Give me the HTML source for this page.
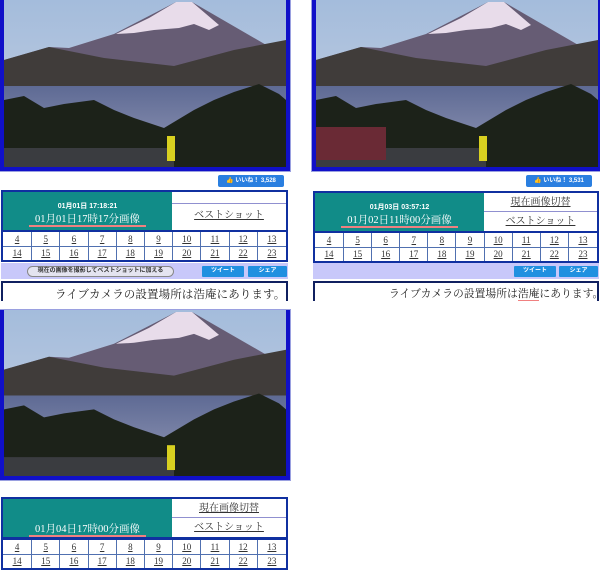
<!DOCTYPE html>
<html><head><meta charset="utf-8"><style>
*{margin:0;padding:0;box-sizing:border-box}
body{width:600px;height:569px;overflow:hidden;background:#fff;position:relative;font-family:"Liberation Serif","Noto Serif CJK SC",serif}
.p{position:absolute;width:290px}
.img{position:absolute;left:0;top:0;width:290px;height:171px;border:4px solid #1010c8;border-top:none;outline:1px solid #9aa0e0}
.img svg{display:block;width:282px;height:167px}
.like{position:absolute;right:6px;top:175px;width:66px;height:12px;background:#2a7fe0;color:#fff;font:bold 6px "Liberation Sans","Noto Sans CJK JP",sans-serif;line-height:12px;text-align:center;border-radius:2px}
.box{position:absolute;left:1px;width:287px;height:42px;border:2px solid #1030a0;display:flex}
.teal{width:169px;background:#118c88;color:#fff;text-align:center;position:relative}
.teal .t1{font:bold 7px "Liberation Sans","Noto Sans CJK JP",sans-serif;position:absolute;top:9px;width:100%}
.teal .t2{font-size:10.5px;position:absolute;top:19px;width:100%}
.teal .t2 span{border-bottom:2px solid #f08080;padding:0 6px}
.wr{flex:1;background:#fff;font-size:10px;text-align:center;color:#333}
.wr div{height:19px;line-height:19px;text-decoration:underline}
.wr div.l{border-bottom:1px solid #9090d0}
table{position:absolute;left:1px;width:287px;border-collapse:collapse;border:2px solid #1030a0;background:#fff}
td{border:1px solid #5070b0;height:15px;text-align:center;font-size:9px;color:#333;text-decoration:underline}
.bar{position:absolute;left:1px;width:287px;height:16px;background:#c8c8fa}
.sb{position:absolute;top:3px;height:11px;color:#fff;background:#2090e0;font:bold 6px "Liberation Sans","Noto Sans CJK JP",sans-serif;line-height:11px;text-align:center;border-radius:1px}
.txt{position:absolute;left:1px;width:287px;height:20px;border:2px solid #102060;border-bottom:none;background:#fff;font-size:11.5px;letter-spacing:0.1px;color:#222;padding-top:3px;white-space:nowrap;overflow:hidden}
.u{border-bottom:2px solid #f08080}
</style></head><body>

<svg width="0" height="0" style="position:absolute"><defs>
<linearGradient id="sky" x1="0" y1="0" x2="0" y2="1"><stop offset="0" stop-color="#a4bcdc"/><stop offset="1" stop-color="#c6d0e0"/></linearGradient>
<linearGradient id="lake" x1="0" y1="0" x2="0" y2="1"><stop offset="0" stop-color="#5e6a94"/><stop offset="1" stop-color="#8088aa"/></linearGradient>
<g id="scene">
<rect width="282" height="167" fill="url(#sky)"/>
<polygon points="0,60 45,47 65,48 110,34 172,2 188,2 264,46 282,46 282,92 0,92" fill="#665c74"/>
<polygon points="112,34 145,18 172,2 188,2 215,25 205,30 190,24 175,28 150,30 130,33" fill="#e8dcea"/>
<polygon points="0,60 45,47 100,58 170,66 230,50 282,40 282,86 0,90" fill="#403c3a"/>
<rect y="86" width="282" height="50" fill="url(#lake)"/>
<polygon points="0,100 20,96 40,108 60,104 90,100 110,110 130,118 160,128 190,110 210,100 230,92 255,84 275,94 282,100 282,167 0,167" fill="#1c2219"/>
<rect y="148" width="170" height="19" fill="#3a3c40"/>
<rect x="163" y="136" width="8" height="25" fill="#d8d020"/>
</g></defs></svg>

<!-- Panel 1 -->
<div class="p" style="left:0;top:0;height:300px">
<div class="img"><svg viewBox="0 0 282 167"><use href="#scene"/></svg></div>
<div class="like">👍 いいね！ 3,528</div>
<div class="box" style="top:190px"><div class="teal"><div class="t1">01月01日 17:18:21</div><div class="t2"><span>01月01日17時17分画像</span></div></div>
<div class="wr"><div class="l" style="height:12px"></div><div style="height:26px;line-height:24px">ベストショット</div></div></div>
<table style="top:230px"><tr><td>4</td><td>5</td><td>6</td><td>7</td><td>8</td><td>9</td><td>10</td><td>11</td><td>12</td><td>13</td></tr><tr><td>14</td><td>15</td><td>16</td><td>17</td><td>18</td><td>19</td><td>20</td><td>21</td><td>22</td><td>23</td></tr></table>
<div class="bar" style="top:263px"><div class="sb" style="left:26px;width:147px;background:#e4e4f0;color:#333;border:1px solid #888;border-radius:6px;line-height:9px">現在の画像を撮影してベストショットに加える</div><div class="sb" style="left:201px;width:42px">ツイート</div><div class="sb" style="left:247px;width:39px">シェア</div></div>
<div class="txt" style="top:281px;padding-left:52px">ライブカメラの設置場所は<span class="u">浩庵</span>にあります。</div>
</div>

<!-- Panel 2 -->
<div class="p" style="left:312px;top:0;height:300px;width:288px">
<div class="img" style="width:288px"><svg viewBox="0 0 282 167"><use href="#scene"/><rect x="0" y="127" width="70" height="33" fill="#6a2a35"/></svg></div>
<div class="like" style="right:8px">👍 いいね！ 3,531</div>
<div class="box" style="top:191px;width:286px"><div class="teal"><div class="t1">01月03日 03:57:12</div><div class="t2"><span>01月02日11時00分画像</span></div></div>
<div class="wr"><div class="l">現在画像切替</div><div>ベストショット</div></div></div>
<table style="top:231px;width:286px"><tr><td>4</td><td>5</td><td>6</td><td>7</td><td>8</td><td>9</td><td>10</td><td>11</td><td>12</td><td>13</td></tr><tr><td>14</td><td>15</td><td>16</td><td>17</td><td>18</td><td>19</td><td>20</td><td>21</td><td>22</td><td>23</td></tr></table>
<div class="bar" style="top:263px;width:286px"><div class="sb" style="left:201px;width:42px">ツイート</div><div class="sb" style="left:246px;width:39px">シェア</div></div>
<div class="txt" style="top:281px;width:286px;padding-left:74px;font-size:10.8px;letter-spacing:0">ライブカメラの設置場所は<span class="u">浩庵</span>にあります。</div>
</div>

<!-- Panel 3 -->
<div class="p" style="left:0;top:310px;height:259px">
<div class="img" style="height:170px"><svg viewBox="0 0 282 167" preserveAspectRatio="none" style="height:166px"><use href="#scene"/></svg></div>
<div class="box" style="top:187px"><div class="teal"><div class="t2" style="top:22px"><span>01月04日17時00分画像</span></div></div>
<div class="wr"><div class="l">現在画像切替</div><div>ベストショット</div></div></div>
<table style="top:228px"><tr><td>4</td><td>5</td><td>6</td><td>7</td><td>8</td><td>9</td><td>10</td><td>11</td><td>12</td><td>13</td></tr><tr><td>14</td><td>15</td><td>16</td><td>17</td><td>18</td><td>19</td><td>20</td><td>21</td><td>22</td><td>23</td></tr></table>
</div>
</body></html>
